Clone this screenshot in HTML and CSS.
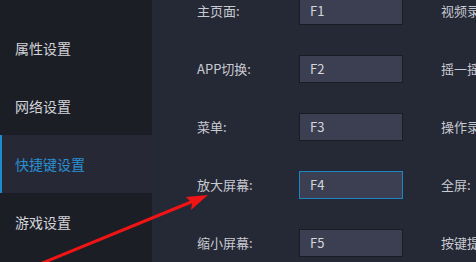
FILE: index.html
```html
<!DOCTYPE html>
<html lang="zh-CN">
<head>
<meta charset="utf-8">
<link rel="stylesheet" href="styles.css">
</head>
<body>
<div class="app">
  <nav class="sidebar">
    <div class="nav-item">属性设置</div>
    <div class="nav-item">网络设置</div>
    <div class="nav-item active">快捷键设置</div>
    <div class="nav-item">游戏设置</div>
  </nav>
  <main class="main">
    <div class="row">
      <span class="label">主页面:</span>
      <div class="key">F1</div>
      <span class="label2">视频录制:</span>
    </div>
    <div class="row">
      <span class="label">APP切换:</span>
      <div class="key">F2</div>
      <span class="label2">摇一摇:</span>
    </div>
    <div class="row">
      <span class="label">菜单:</span>
      <div class="key">F3</div>
      <span class="label2">操作录制:</span>
    </div>
    <div class="row">
      <span class="label">放大屏幕:</span>
      <div class="key focus">F4</div>
      <span class="label2">全屏:</span>
    </div>
    <div class="row">
      <span class="label">缩小屏幕:</span>
      <div class="key">F5</div>
      <span class="label2">按键提示:</span>
    </div>
  </main>
</div>
<svg class="annot" width="476" height="262" viewBox="0 0 476 262">
  <line x1="40" y1="264" x2="196" y2="200" stroke="#f01414" stroke-width="3" stroke-linecap="round"/>
  <polygon points="208,195 186,197 192,203 191,210" fill="#f01414"/>
</svg>
</body>
</html>
```
FILE: styles.css
```css
html, body {
  margin: 0;
  padding: 0;
}
body {
  width: 476px;
  height: 262px;
  overflow: hidden;
  background: #252835;
  font-family: "Noto Sans CJK SC", "Noto Sans", sans-serif;
  position: relative;
}
.app {
  display: flex;
  height: 262px;
  overflow: hidden;
}
.sidebar {
  width: 152px;
  flex: none;
  background: #1c1e26;
  padding-top: 19px;
  box-sizing: border-box;
}
.nav-item {
  height: 58px;
  display: flex;
  align-items: center;
  padding-left: 15px;
  font-size: 14px;
  color: #d2d4da;
  box-sizing: border-box;
}
.nav-item.active {
  background: #262935;
  color: #2a8fd4;
  border-left: 2px solid #1e8ccc;
  padding-left: 13px;
}
.main {
  flex: 1;
  min-width: 0;
  overflow: hidden;
  padding-left: 45px;
  margin-top: -3px;
}
.row {
  display: grid;
  grid-template-columns: 102px 104px auto;
  align-items: center;
  height: 58px;
  align-content: start;
}
.label, .label2 {
  font-size: 13px;
  color: #c8cad2;
  white-space: nowrap;
  line-height: 28px;
}
.label2 {
  margin-left: 38px;
}
.key {
  height: 28px;
  box-sizing: border-box;
  border: 1px solid #1a1c24;
  background: #3b3f51;
  color: #d4d6dc;
  font-size: 13px;
  line-height: 26px;
  padding-left: 10px;
}
.key.focus {
  border-color: #1a86c4;
}
.annot {
  position: absolute;
  left: 0;
  top: 0;
  pointer-events: none;
}
```
